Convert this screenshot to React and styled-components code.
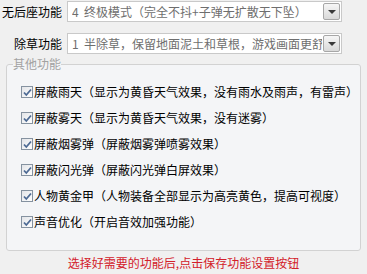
import React from 'react';
import styled, { createGlobalStyle } from 'styled-components';

const Global = createGlobalStyle`
  html, body {
    margin: 0;
    background: #f0f0f0;
  }
  body {
    font-family: "Noto Sans CJK SC", "Liberation Sans", sans-serif;
    font-size: 12px;
    color: #000;
  }
`;

const selects = [
  { label: '无后座功能', num: '4', value: '终极模式（完全不抖+子弹无扩散无下坠）' },
  { label: '除草功能', num: '1', value: '半除草，保留地面泥土和草根，游戏画面更舒适' },
];

const options = [
  '屏蔽雨天（显示为黄昏天气效果，没有雨水及雨声，有雷声）',
  '屏蔽雾天（显示为黄昏天气效果，没有迷雾）',
  '屏蔽烟雾弹（屏蔽烟雾弹喷雾效果）',
  '屏蔽闪光弹（屏蔽闪光弹白屏效果）',
  '人物黄金甲（人物装备全部显示为高亮黄色，提高可视度）',
  '声音优化（开启音效加强功能）',
];

const App = () => {
  return (
    <Page>
      <Global />
      <Rows>
        {selects.map((s) => (
          <Row key={s.label}>
            <Label>{s.label}</Label>
            <Combo>
              <ComboText>
                <Num>{s.num}</Num>
                {s.value}
              </ComboText>
              <DropButton>
                <Arrow />
              </DropButton>
            </Combo>
          </Row>
        ))}
      </Rows>

      <Group>
        <Legend>其他功能</Legend>
        <List>
          {options.map((o) => (
            <CheckRow key={o}>
              <Box>
                <svg width="9" height="9" viewBox="0 0 9 9">
                  <path d="M1 4.5 L3.3 7 L8 1.5" fill="none" stroke="#4d6a94" strokeWidth="1.8" />
                </svg>
              </Box>
              <span>{o}</span>
            </CheckRow>
          ))}
        </List>
      </Group>

      <Hint>选择好需要的功能后,点击保存功能设置按钮</Hint>
    </Page>
  );
};

export default App;

const Page = styled.div`
  width: 367px;
  height: 274px;
  display: flex;
  flex-direction: column;
  overflow: hidden;
`;

const Rows = styled.div`
  display: flex;
  flex-direction: column;
  gap: 11px;
  padding-top: 1px;
`;

const Row = styled.div`
  display: flex;
  align-items: center;
  gap: 5px;
  height: 21px;
`;

const Label = styled.div`
  width: 62px;
  text-align: right;
  white-space: nowrap;
  line-height: 16px;
`;

const Combo = styled.div`
  width: 275px;
  height: 21px;
  box-sizing: border-box;
  border: 1px solid #c9c9c9;
  background: #fff;
  display: flex;
  align-items: center;
  padding: 0 1px 0 4px;
`;

const ComboText = styled.div`
  flex: 1;
  overflow: hidden;
  white-space: nowrap;
  color: #6e6e6e;
  line-height: 16px;
`;

const Num = styled.span`
  display: inline-block;
  width: 12px;
`;

const DropButton = styled.div`
  width: 17px;
  height: 17px;
  box-sizing: border-box;
  border: 1px solid #a7a7a7;
  border-radius: 2px;
  background: linear-gradient(#f6f6f6, #d9d9d9);
  display: flex;
  align-items: center;
  justify-content: center;
  margin-left: 1px;
`;

const Arrow = styled.div`
  width: 0;
  height: 0;
  border-left: 4px solid transparent;
  border-right: 4px solid transparent;
  border-top: 4px solid #3a3a3a;
`;

const Group = styled.fieldset`
  margin: 2px 6px 0 6px;
  padding: 0;
  border: 1px solid #d2d2d2;
  border-radius: 3px;
  background: #f4f5f7;
`;

const Legend = styled.legend`
  margin-left: 6px;
  padding: 0;
  color: #a2a2a2;
  line-height: 16px;
`;

const List = styled.div`
  display: flex;
  flex-direction: column;
  padding: 7px 0 15px 14px;
`;

const CheckRow = styled.div`
  display: flex;
  align-items: center;
  gap: 1px;
  height: 26px;
  white-space: nowrap;
  line-height: 16px;
`;

const Box = styled.span`
  width: 12px;
  height: 12px;
  box-sizing: border-box;
  border: 1px solid #8592a0;
  background: linear-gradient(135deg, #e2e4e8, #ffffff);
  display: flex;
  align-items: center;
  justify-content: center;
`;

const Hint = styled.div`
  margin-top: 4px;
  text-align: center;
  color: #d3202a;
  line-height: 16px;
`;
